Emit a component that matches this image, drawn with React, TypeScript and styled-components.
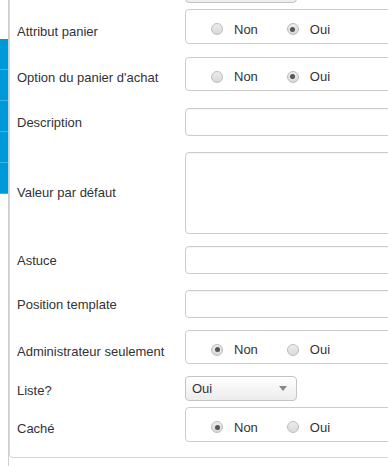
import React from 'react';
import styled, { createGlobalStyle } from 'styled-components';

const GlobalStyle = createGlobalStyle`
  html, body {
    margin: 0;
    padding: 0;
    background: #fff;
    overflow: hidden;
  }
  body {
    font-family: "Liberation Sans", Arial, Helvetica, sans-serif;
    font-size: 13px;
    color: #333;
  }
`;

const Page = styled.div`
  display: flex;
  flex-direction: row;
  width: 388px;
  height: 466px;
  overflow: hidden;
`;

const Sidebar = styled.div`
  flex: 0 0 9px;
  width: 9px;
  border-right: 1px solid #cfcfcf;
  padding-top: 39px;
  box-sizing: border-box;
  display: flex;
  flex-direction: column;
`;

const SideItem = styled.div`
  width: 8px;
  height: 31px;
  background: #0099d8;
  border-bottom: 1px solid #3fb1e2;
  box-sizing: border-box;
`;

const Panel = styled.div`
  flex: 0 0 430px;
  height: 458px;
  border: 1px solid #d6d6d6;
  border-top: none;
  border-radius: 0 0 4px 4px;
  padding-left: 7px;
  box-sizing: border-box;
  display: flex;
  flex-direction: column;
`;

const Row = styled.div<{ $mt: number }>`
  display: flex;
  flex-direction: row;
  align-items: center;
  margin-top: ${({ $mt }) => $mt}px;
`;

const Label = styled.div<{ $shift?: number }>`
  flex: 0 0 168px;
  width: 168px;
  line-height: 16px;
  padding-top: ${({ $shift = 0 }) => $shift * 2}px;
`;

const Input = styled.div<{ $h: number }>`
  flex: 1;
  height: ${({ $h }) => $h}px;
  border: 1px solid #cccccc;
  border-radius: 4px;
  box-sizing: border-box;
  background: #fff;
  box-shadow: inset 0 1px 1px rgba(0, 0, 0, 0.04);
`;

const RadioGroup = styled.div<{ $h: number }>`
  flex: 1;
  height: ${({ $h }) => $h}px;
  border: 1px solid #cccccc;
  border-radius: 4px;
  box-sizing: border-box;
  display: flex;
  flex-direction: row;
  align-items: center;
  padding: 5px 0 0 25px;
`;

const RadioOption = styled.div`
  display: flex;
  align-items: center;
  margin-right: 29px;
`;

const Circle = styled.span<{ $checked: boolean }>`
  width: 12px;
  height: 12px;
  border-radius: 50%;
  border: 1px solid #bdbdbd;
  box-sizing: border-box;
  background: linear-gradient(#ececec, #d9d9d9);
  display: flex;
  align-items: center;
  justify-content: center;
  margin-right: 11px;
  &::after {
    content: '';
    display: ${({ $checked }) => ($checked ? 'block' : 'none')};
    width: 5px;
    height: 5px;
    border-radius: 50%;
    background: #555;
  }
`;

const Select = styled.div`
  flex: 0 0 112px;
  width: 112px;
  height: 25px;
  border: 1px solid #c4c4c4;
  border-radius: 4px;
  box-sizing: border-box;
  background: linear-gradient(#ffffff, #ececec);
  display: flex;
  align-items: center;
  justify-content: space-between;
  padding: 0 9px 0 6px;
`;

const Arrow = styled.span`
  width: 0;
  height: 0;
  border-left: 4px solid transparent;
  border-right: 4px solid transparent;
  border-top: 5px solid #888;
`;

const Spacer = styled.div`
  flex: 0 0 168px;
`;

interface RadioProps {
  value: 'Non' | 'Oui';
  h: number;
}

const YesNo: React.FC<RadioProps> = ({ value, h }) => (
  <RadioGroup $h={h}>
    <RadioOption>
      <Circle $checked={value === 'Non'} />
      Non
    </RadioOption>
    <RadioOption>
      <Circle $checked={value === 'Oui'} />
      Oui
    </RadioOption>
  </RadioGroup>
);

const App: React.FC = () => {
  return (
    <>
      <GlobalStyle />
      <Page>
        <Sidebar>
          {[0, 1, 2, 3, 4].map((i) => (
            <SideItem key={`side-${i}`} />
          ))}
        </Sidebar>
        <Panel>
          {/* the previous field, scrolled out of view above */}
          <Row $mt={-22}>
            <Spacer />
            <Select />
          </Row>
          <Row $mt={6}>
            <Label $shift={5}>Attribut panier</Label>
            <YesNo value="Oui" h={35} />
          </Row>
          <Row $mt={13}>
            <Label $shift={4}>Option du panier d'achat</Label>
            <YesNo value="Oui" h={34} />
          </Row>
          <Row $mt={17}>
            <Label $shift={1}>Description</Label>
            <Input $h={28} />
          </Row>
          <Row $mt={16}>
            <Label>Valeur par défaut</Label>
            <Input $h={82} />
          </Row>
          <Row $mt={12}>
            <Label $shift={1}>Astuce</Label>
            <Input $h={28} />
          </Row>
          <Row $mt={16}>
            <Label $shift={1}>Position template</Label>
            <Input $h={28} />
          </Row>
          <Row $mt={12}>
            <Label $shift={5}>Administrateur seulement</Label>
            <YesNo value="Non" h={34} />
          </Row>
          <Row $mt={12}>
            <Label $shift={2}>Liste?</Label>
            <Select>
              <span>Oui</span>
              <Arrow />
            </Select>
          </Row>
          <Row $mt={6}>
            <Label $shift={4}>Caché</Label>
            <YesNo value="Non" h={35} />
          </Row>
        </Panel>
      </Page>
    </>
  );
};

export default App;
